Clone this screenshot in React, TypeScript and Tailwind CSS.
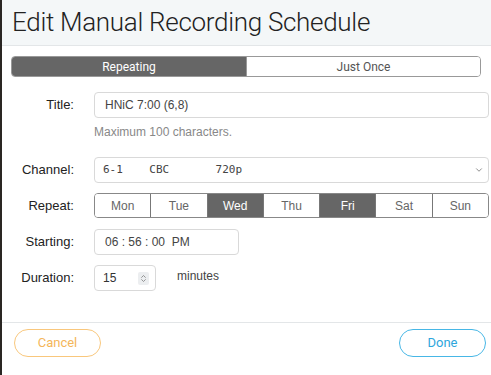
import { ChevronDown, ChevronsUpDown } from "lucide-react";

const days = [
  { name: "Mon", on: false },
  { name: "Tue", on: false },
  { name: "Wed", on: true },
  { name: "Thu", on: false },
  { name: "Fri", on: true },
  { name: "Sat", on: false },
  { name: "Sun", on: false },
];

export default function App() {
  return (
    <div className="w-[491px] h-[375px] flex bg-[#2a2623] font-['Roboto',sans-serif] text-[#222]">
      <div className="ml-[2px] flex-1 flex flex-col bg-white">
        {/* header */}
        <div className="h-[46px] bg-[#f4f7f8] border-b border-[#e3e6e8] pl-[10px] flex items-center">
          <h1 className="text-[26px] font-light tracking-[-0.3px] text-[#222] leading-none pb-[2px]">
            Edit Manual Recording Schedule
          </h1>
        </div>

        <div className="flex-1 pl-[9px] pr-[10px] pt-[10px]">
          {/* mode toggle */}
          <div className="flex h-[21px] rounded-[4px] border border-[#999] overflow-hidden text-[12px]">
            <div className="w-1/2 bg-[#666] text-white flex items-center justify-center">Repeating</div>
            <div className="w-1/2 bg-white text-[#555] flex items-center justify-center border-l border-[#999]">
              Just Once
            </div>
          </div>

          <div className="mt-[15px] -mr-[8px] flex flex-col text-[13px] font-['Liberation_Sans',sans-serif]">
            {/* title */}
            <div className="flex items-center h-[26px]">
              <label className="w-[63px] text-right text-[#222]">Title:</label>
              <div className="ml-[20px] flex-1 h-[26px] border border-[#d9d9d9] rounded-[4px] flex items-center px-[10px] text-[#444] text-[12px]">
                HNiC 7:00 (6,8)
              </div>
            </div>
            <div className="ml-[83px] mt-[5px] text-[12px] text-[#888]">Maximum 100 characters.</div>

            {/* channel */}
            <div className="flex items-center h-[26px] mt-[16px]">
              <label className="w-[63px] text-right">Channel:</label>
              <div className="ml-[20px] flex-1 h-[26px] border border-[#d9d9d9] rounded-[4px] flex items-center pl-[8px] pr-[4px] text-[#444] text-[11px] font-['DejaVu_Sans_Mono',monospace]">
                <span className="whitespace-pre flex-1">6-1    CBC       720p</span>
                <ChevronDown size={10} className="text-[#777]" strokeWidth={2} />
              </div>
            </div>

            {/* repeat */}
            <div className="flex items-center h-[25px] mt-[10px]">
              <label className="w-[63px] text-right">Repeat:</label>
              <div className="ml-[20px] flex-1 h-[25px] border border-[#888] rounded-[4px] overflow-hidden flex text-[12px]">
                {days.map((d, i) => (
                  <div
                    key={d.name}
                    className={
                      "flex-1 flex items-center justify-center " +
                      (i > 0 ? "border-l border-[#777] " : "") +
                      (d.on ? "bg-[#666] text-white" : "bg-white text-[#666]")
                    }
                  >
                    {d.name}
                  </div>
                ))}
              </div>
            </div>

            {/* starting */}
            <div className="flex items-center h-[26px] mt-[11px]">
              <label className="w-[63px] text-right">Starting:</label>
              <div className="ml-[20px] w-[145px] h-[26px] border border-[#d9d9d9] rounded-[4px] flex items-center pl-[10px] text-[#444] text-[12px] whitespace-pre">
                06 : 56 : 00  PM
              </div>
            </div>

            {/* duration */}
            <div className="flex items-center h-[26px] mt-[10px]">
              <label className="w-[63px] text-right">Duration:</label>
              <div className="ml-[20px] w-[62px] h-[26px] border border-[#d9d9d9] rounded-[4px] flex items-center pl-[8px] pr-[6px] text-[#333] text-[12px]">
                <span className="flex-1">15</span>
                <span className="w-[11px] h-[13px] bg-[#eceef0] rounded-[2px] flex items-center justify-center">
                  <ChevronsUpDown size={9} className="text-[#777]" />
                </span>
              </div>
              <span className="ml-[21px] -mt-[5px] text-[12px] text-[#444]">minutes</span>
            </div>
          </div>
        </div>

        {/* footer */}
        <div className="h-[53px] border-t border-[#e3e6e8] flex items-start justify-between pt-[6px] pl-[12px] pr-[5px] text-[13px]">
          <button className="w-[87px] h-[28px] rounded-full border border-[#f9c77c] text-[#f4b65a]">Cancel</button>
          <button className="w-[87px] h-[28px] rounded-full border border-[#47b7e6] text-[#2ea6dc]">Done</button>
        </div>
      </div>
    </div>
  );
}
